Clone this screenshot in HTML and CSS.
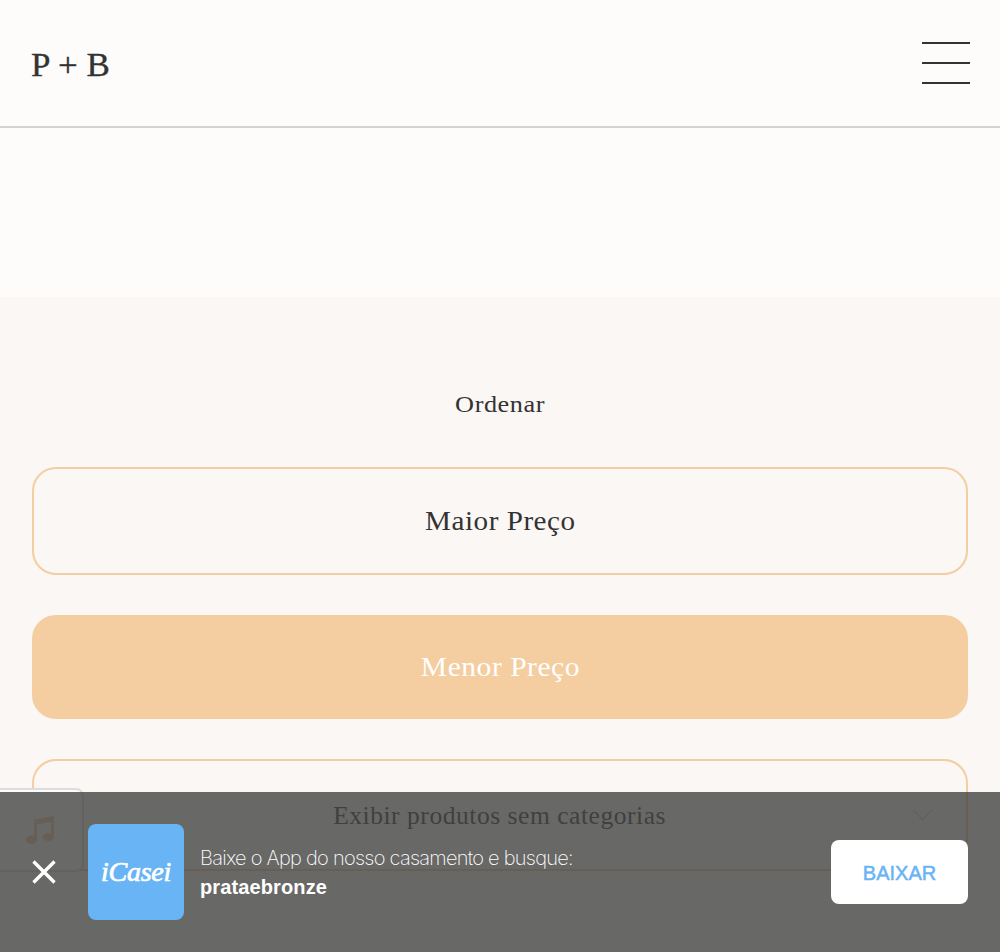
FILE: index.html
```html
<!DOCTYPE html>
<html lang="pt-BR">
<head>
<meta charset="utf-8">
<title>P + B</title>
<link rel="stylesheet" href="styles.css">
</head>
<body>
<header class="header">
  <div class="brand">P + B</div>
  <div class="menu"><span class="menu-line"></span><span class="menu-line"></span><span class="menu-line"></span></div>
</header>
<main class="content">
  <h2 class="sort-title"><span class="sort-label">Ordenar</span></h2>
  <div class="option"><span class="maior">Maior Preço</span></div>
  <div class="option option-active"><span class="menor">Menor Preço</span></div>
  <div class="select"><span class="select-label">Exibir produtos sem categorias</span>
    <svg class="chevron" width="22" height="12" viewBox="0 0 22 12"><path d="M1 1L10.5 10.5L20 1" fill="none" stroke="#f4cda0" stroke-width="1.3"/></svg>
  </div>
</main>
<div class="music">
  <svg class="note" width="30" height="29" viewBox="0 0 30 29"><path fill="#f4cda0" d="M9 3.5L29 0V20.5A5.7 4 0 1 1 26 17.4V6L12 8.5V23.5A5.7 4.2 0 1 1 9 20.1Z"/></svg>
</div>
<aside class="banner">
  <svg class="close" width="24" height="24" viewBox="0 0 24 24"><path d="M1.5 1.5L22.5 22.5M22.5 1.5L1.5 22.5" stroke="#fff" stroke-width="3.4"/></svg>
  <div class="app-icon"><span class="logo-text">iCasei</span></div>
  <div class="message"><p class="lead">Baixe o App do nosso casamento e busque:</p><p class="name">prataebronze</p></div>
  <div class="download">BAIXAR</div>
</aside>
</body>
</html>
```
FILE: styles.css
```css
* { box-sizing: border-box; }
body { margin: 0; height: 952px; overflow: hidden; position: relative; background: #fdfcfa; color: #333; font-family: "Liberation Serif", serif; }
.header { height: 128px; padding: 0 30px 0 31px; display: flex; justify-content: space-between; align-items: center; border-bottom: 2px solid #d3d3d3; }
.brand { font-size: 34px; line-height: 40px; padding-top: 3px; white-space: nowrap; transform: scaleX(1.03); transform-origin: left; -webkit-text-stroke: .3px #333; }
.menu { display: flex; flex-direction: column; gap: 18px; width: 48px; }
.menu-line { height: 2px; background: #333; }
.content { margin-top: 169px; height: 655px; padding: 90px 32px 0; background: #fbf7f5; display: flex; flex-direction: column; }
.sort-title { margin: 0 0 48px; height: 32px; font-size: 24px; line-height: 34px; font-weight: 400; text-align: center; }
.sort-label, .maior, .menor, .select-label { display: inline-block; letter-spacing: .5px; }
.sort-label { transform: scaleX(1.095); }
.option { height: 108px; flex: none; border: 2px solid #f4cda0; border-radius: 24px; display: flex; align-items: center; justify-content: center; font-size: 28px; margin-bottom: 40px; }
.option-active { height: 104px; background: #f4cda0; color: #fff; }
.maior { transform: scaleX(1.04); }
.menor { transform: scaleX(1.055); }
.select { height: 112px; flex: none; border: 2px solid #f4cda0; border-radius: 24px; display: grid; grid-template-columns: 1fr auto 1fr; align-items: center; padding-right: 32px; padding-left: 32px; font-size: 24.5px; }
.select-label { grid-column: 2; transform: scaleX(1.043); padding-top: 1px; white-space: nowrap; }
.chevron { justify-self: end; }
.music { position: absolute; left: -2px; top: 788px; width: 86px; height: 84px; border: 2px solid #ddd; border-radius: 0 8px 8px 0; background: #fdfcfa; padding: 26px 0 0 25px; }
.note { display: block; }
.banner { position: absolute; left: 0; right: 0; top: 792px; height: 160px; padding: 0 32px; background: rgba(67, 67, 67, .8); display: flex; align-items: center; }
.close { display: block; flex: none; }
.app-icon { width: 96px; height: 96px; margin-left: 32px; border-radius: 8px; background: #69b4f4; color: #fff; display: flex; align-items: center; justify-content: center; }
.logo-text { font: italic 28px/36px "Liberation Serif", serif; -webkit-text-stroke: .7px #fff; letter-spacing: -0.3px; }
.message { margin-left: 16px; padding-top: 2px; flex: 1; color: #fff; }
.lead { margin: 0; font: 200 20px/29px Inter, sans-serif; letter-spacing: -0.74px; white-space: nowrap; }
.name { margin: 0; font: bold 20px/29px "Liberation Sans", sans-serif; letter-spacing: 0.12px; }
.download { width: 137px; height: 64px; border-radius: 8px; background: #fff; color: #69b4f4; display: flex; align-items: center; justify-content: center; font: 20px/24px "Liberation Sans", sans-serif; -webkit-text-stroke: .5px #69b4f4; padding-top: 2px; }
```
